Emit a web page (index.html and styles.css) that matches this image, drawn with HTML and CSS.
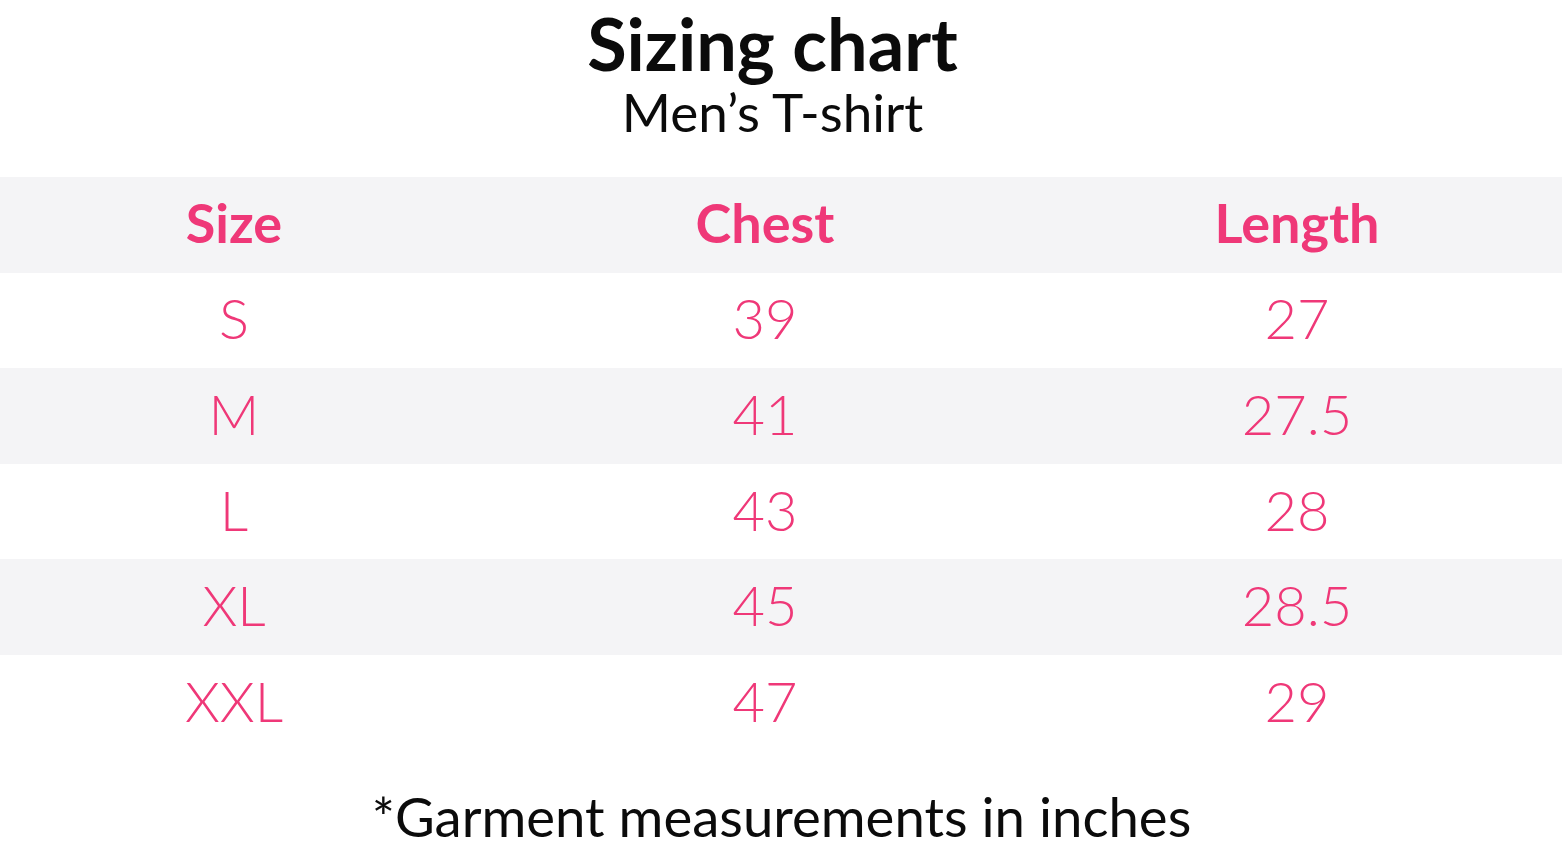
FILE: index.html
```html
<!DOCTYPE html>
<html>
<head>
<meta charset="utf-8">
<link rel="stylesheet" href="styles.css">
</head>
<body>
<div class="page">
  <header class="head">
    <h1 class="title">Sizing chart</h1>
    <p class="subtitle">Men’s T-shirt</p>
  </header>
  <div class="chart">
    <div class="row row-head shaded">
      <div class="cell c1">Size</div><div class="cell c2">Chest</div><div class="cell c3">Length</div>
    </div>
    <div class="row">
      <div class="cell c1">S</div><div class="cell c2">39</div><div class="cell c3">27</div>
    </div>
    <div class="row shaded">
      <div class="cell c1">M</div><div class="cell c2">41</div><div class="cell c3">27.5</div>
    </div>
    <div class="row">
      <div class="cell c1">L</div><div class="cell c2">43</div><div class="cell c3">28</div>
    </div>
    <div class="row shaded">
      <div class="cell c1">XL</div><div class="cell c2">45</div><div class="cell c3">28.5</div>
    </div>
    <div class="row">
      <div class="cell c1">XXL</div><div class="cell c2">47</div><div class="cell c3">29</div>
    </div>
  </div>
  <p class="note">*Garment measurements in inches</p>
</div>
</body>
</html>
```
FILE: styles.css
```css
html, body {
  margin: 0;
  padding: 0;
  background: #ffffff;
}
.page {
  width: 1563px;
  height: 852px;
  font-family: Lato, "Open Sans", "Liberation Sans", sans-serif;
  color: #0b0b0b;
  overflow: hidden;
}
.head {
  display: flex;
  flex-direction: column;
  align-items: center;
  height: 177px;
  padding-right: 18px;
  box-sizing: border-box;
}
.title {
  margin: 0;
  font-size: 72px;
  font-weight: 700;
  line-height: 87px;
}
.subtitle {
  margin: -8px 0 0;
  font-size: 53px;
  font-weight: 400;
  line-height: 66px;
}
.chart {
  width: 1562px;
  display: flex;
  flex-direction: column;
}
.row {
  display: flex;
  height: 95.6px;
  align-items: center;
  color: #ef3878;
  font-size: 56px;
  font-weight: 300;
  line-height: 70px;
}
.row-head {
  font-weight: 700;
  font-size: 54px;
}
.shaded {
  background: #f4f4f6;
}
.cell {
  text-align: center;
  padding-bottom: 4px;
}
.c1 { width: 468px; }
.c2 { width: 594px; }
.c3 { width: 470px; }
.note {
  margin: 0;
  padding-top: 30px;
  text-align: center;
  font-size: 54.5px;
  font-weight: 400;
  line-height: 70px;
}
```
